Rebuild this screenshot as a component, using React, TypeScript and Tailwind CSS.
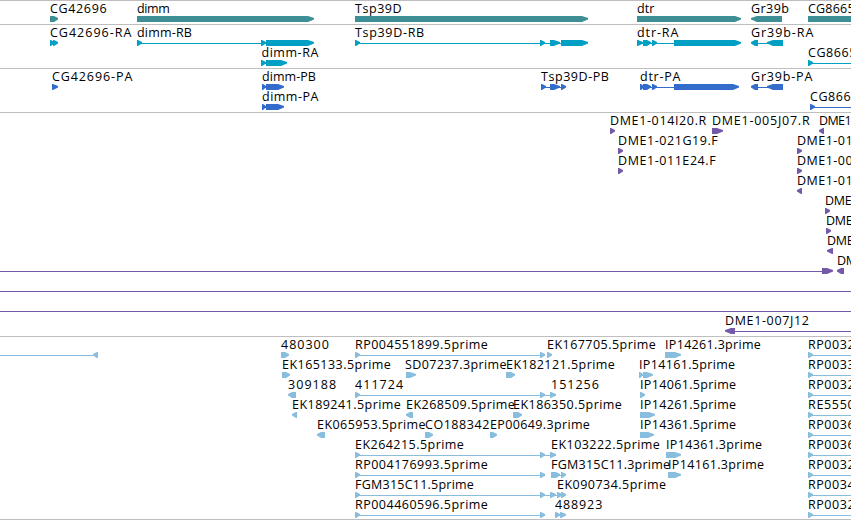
import React from "react";

type Label = [text: string, x: number, end: number, row: number];
// dir: 1 = forward strand, -1 = reverse strand, 0 = plain block
type Block = [x1: number, x2: number, row: number, dir?: number];
type Link = [x1: number, x2: number, row: number];

interface TrackData {
  name: string;
  top: number;
  height: number;
  color: string;
  size: string;
  labels: Label[];
  blocks: Block[];
  links: Link[];
}

const WIDTH = 851;

const tracks: TrackData[] = [
  {
    name: "Genes",
    top: 1,
    height: 23,
    color: "#3d8e95",
    size: "h-[24px]",
    labels: [
      ["CG42696", 50, 106, 0],
      ["dimm", 137, 169.3, 0],
      ["Tsp39D", 355, 401, 0],
      ["dtr", 637, 653.7, 0],
      ["Gr39b", 751, 788.3, 0],
      ["CG8665", 808, 854, 0],
    ],
    blocks: [
      [50, 58, 0],
      [137, 314, 0],
      [355, 588, 0],
      [637, 741, 0],
      [751, 782, 0, -1],
      [808, 851, 0, 0],
    ],
    links: [],
  },
  {
    name: "Transcripts",
    top: 25,
    height: 43,
    color: "#009fc3",
    size: "h-[44px]",
    labels: [
      ["CG42696-RA", 50, 130.7, 0],
      ["dimm-RB", 137, 191.3, 0],
      ["dimm-RA", 261.5, 317.7, 1],
      ["Tsp39D-RB", 355, 423.5, 0],
      ["dtr-RA", 637, 677.7, 0],
      ["Gr39b-RA", 751, 812.7, 0],
      ["CG8665-RA", 808, 877, 1],
    ],
    blocks: [
      [50, 54, 0], [53, 58, 0],
      [137, 142, 0], [261, 266, 0], [266, 314, 0],
      [261, 266, 1], [266, 287, 1],
      [355, 360, 0], [540, 545, 0], [550, 560, 0], [561, 588, 0],
      [637, 643, 0], [643, 651, 0], [652, 657, 0], [674, 741, 0],
      [751, 758, 0, -1], [767, 783, 0, -1],
      [808, 813, 1],
    ],
    links: [
      [137, 266, 0], [261, 267, 1], [355, 562, 0],
      [637, 675, 0], [757, 768, 0], [808, 851, 1],
    ],
  },
  {
    name: "Coding",
    top: 69,
    height: 43,
    color: "#336ccb",
    size: "h-[44px]",
    labels: [
      ["CG42696-PA", 52, 131.7, 0],
      ["dimm-PB", 262, 315.3, 0],
      ["dimm-PA", 262, 317.7, 1],
      ["Tsp39D-PB", 541, 608.3, 0],
      ["dtr-PA", 640, 679.7, 0],
      ["Gr39b-PA", 751, 811.7, 0],
      ["CG8665-PA", 810, 879, 1],
    ],
    blocks: [
      [52, 58, 0],
      [262, 266, 0], [266, 284, 0],
      [262, 266, 1], [266, 284, 1],
      [541, 546, 0], [550, 560, 0], [561, 566, 0],
      [640, 644, 0], [643, 651, 0], [652, 657, 0], [674, 739, 0],
      [751, 758, 0, -1], [767, 783, 0, -1],
      [810, 815, 1],
    ],
    links: [
      [262, 267, 0], [262, 267, 1], [541, 562, 0],
      [640, 675, 0], [757, 768, 0], [810, 851, 1],
    ],
  },
  {
    name: "BACs",
    top: 113,
    height: 223,
    color: "#7459a9",
    size: "h-[224px]",
    labels: [
      ["DME1-014I20.R", 610, 705.7, 0],
      ["DME1-005J07.R", 712, 809, 0],
      ["DME1", 819, 851, 0],
      ["DME1-021G19.F", 618, 717.2, 1],
      ["DME1-01", 797, 852, 1],
      ["DME1-011E24.F", 618, 715, 2],
      ["DME1-00", 797, 852, 2],
      ["DME1-01", 797, 852, 3],
      ["DME", 825, 851, 4],
      ["DME", 826, 852, 5],
      ["DME", 827, 853, 6],
      ["DME", 837, 863, 7],
      ["DME1-007J12", 725, 808.3, 10],
    ],
    blocks: [
      [610, 615, 0], [712, 723, 0], [819, 824, 0, -1],
      [618, 623, 1], [797, 802, 1],
      [618, 623, 2], [797, 802, 2],
      [797, 802, 3, -1],
      [825, 830, 4], [826, 831, 5], [827, 833, 6, -1],
      [822, 833, 7], [837, 844, 7, -1],
      [725, 735, 10, -1],
    ],
    links: [
      [0, 823, 7], [0, 851, 8], [0, 851, 9], [734, 851, 10],
    ],
  },
  {
    name: "ESTs",
    top: 337,
    height: 182,
    color: "#88bddd",
    size: "h-[183px]",
    labels: [
      ["480300", 281, 328.3, 0],
      ["RP004551899.5prime", 355, 487.3, 0],
      ["EK167705.5prime", 547, 655.3, 0],
      ["IP14261.3prime", 665, 760.3, 0],
      ["RP0032", 808, 854, 0],
      ["EK165133.5prime", 282, 390.3, 1],
      ["SD07237.3prime", 405, 506, 1],
      ["EK182121.5prime", 506, 614.3, 1],
      ["IP14161.5prime", 639, 734.5, 1],
      ["RP0033", 808, 854, 1],
      ["309188", 288, 335.5, 2],
      ["411724", 355, 402.5, 2],
      ["151256", 551, 598.3, 2],
      ["IP14061.5prime", 640, 735.5, 2],
      ["RP0032", 808, 854, 2],
      ["EK189241.5prime", 292, 400.3, 3],
      ["EK268509.5prime", 406, 514.3, 3],
      ["EK186350.5prime", 513, 621.3, 3],
      ["IP14261.5prime", 640, 735.5, 3],
      ["RE5550", 808, 854, 3],
      ["EK065953.5prime", 317, 425, 4],
      ["CO188342", 425, 488.7, 4],
      ["EP00649.3prime", 490, 589.3, 4],
      ["IP14361.5prime", 640, 735.5, 4],
      ["RP0036", 808, 854, 4],
      ["EK264215.5prime", 355, 463.3, 5],
      ["EK103222.5prime", 551, 659.3, 5],
      ["IP14361.3prime", 666, 761.5, 5],
      ["RP0036", 808, 854, 5],
      ["RP004176993.5prime", 355, 487.3, 6],
      ["FGM315C11.3prime", 551, 669.5, 6],
      ["IP14161.3prime", 668, 763.5, 6],
      ["RP0032", 808, 854, 6],
      ["FGM315C11.5prime", 355, 473.3, 7],
      ["EK090734.5prime", 557, 665.5, 7],
      ["RP0034", 808, 854, 7],
      ["RP004460596.5prime", 355, 487.3, 8],
      ["488923", 555, 601.7, 8],
      ["RP0032", 808, 854, 8],
    ],
    blocks: [
      [93, 98, 0, -1], [281, 289, 0], [355, 360, 0], [540, 545, 0], [547, 552, 0], [665, 681, 0], [808, 813, 0],
      [282, 290, 1], [406, 416, 1], [506, 515, 1], [639, 643, 1], [643, 653, 1], [808, 813, 1],
      [288, 296, 2, -1], [355, 360, 2], [540, 545, 2], [550, 556, 2], [640, 645, 2], [808, 813, 2],
      [292, 297, 3, -1], [406, 413, 3, -1], [513, 522, 3], [640, 655, 3], [808, 813, 3],
      [317, 325, 4, -1], [425, 433, 4], [490, 497, 4], [640, 654, 4], [808, 813, 4],
      [355, 360, 5], [540, 545, 5], [550, 556, 5], [666, 681, 5], [808, 813, 5],
      [355, 360, 6], [540, 545, 6], [551, 560, 6], [561, 566, 6], [668, 681, 6], [808, 813, 6],
      [355, 360, 7], [540, 545, 7], [550, 556, 7], [557, 562, 7], [561, 566, 7], [808, 813, 7],
      [355, 360, 8], [540, 545, 8], [555, 560, 8], [560, 566, 8], [808, 813, 8],
    ],
    links: [
      [0, 93, 0], [355, 545, 0], [808, 851, 0],
      [639, 644, 1], [808, 851, 1],
      [355, 556, 2], [808, 851, 2],
      [808, 851, 3],
      [808, 851, 4],
      [355, 556, 5], [808, 851, 5],
      [355, 545, 6], [555, 564, 6], [808, 851, 6],
      [355, 565, 7], [808, 851, 7],
      [355, 545, 8], [555, 564, 8], [808, 851, 8],
    ],
  },
];

function arrowPoints(x1: number, x2: number, y: number, dir: number) {
  if (dir === 0) return `${x1},${y} ${x2},${y} ${x2},${y + 6} ${x1},${y + 6}`;
  const w = x2 - x1;
  const head = w <= 6 ? w : w <= 9 ? 5 : 7;
  const at = (d: number) => (dir > 0 ? x1 + d : x2 - d);
  const shoulder = w - head + 1;
  return [
    [at(0), y],
    [at(shoulder), y],
    [at(w), y + 2],
    [at(w), y + 3.5],
    [at(shoulder), y + 6],
    [at(0), y + 6],
  ]
    .map((p) => p.join(","))
    .join(" ");
}

function Track({ track }: { track: TrackData }) {
  const { name, top, height, color, size, labels, blocks, links } = track;
  const baseline = (row: number) => top + 12 + row * 20;
  return (
    <section aria-label={name} className={`w-full shrink-0 border-t border-[#bebebe] ${size}`}>
      <svg
        width={WIDTH}
        height={height}
        viewBox={`0 ${top} ${WIDTH} ${height}`}
        className="block overflow-hidden"
      >
        <g fill={color}>
          {links.map(([x1, x2, row], i) => (
            <rect key={i} x={x1} y={baseline(row) + 6} width={x2 - x1} height={1} />
          ))}
          {blocks.map(([x1, x2, row, dir = 1], i) => (
            <polygon key={i} points={arrowPoints(x1, x2, baseline(row) + 3, dir)} />
          ))}
        </g>
        <g className="fill-black font-['Open_Sans','DejaVu_Sans',sans-serif] text-[12.5px]">
          {labels.map(([text, x, end, row], i) => (
            <text
              key={i}
              x={x}
              y={baseline(row)}
              textLength={end - x + 0.6}
              lengthAdjust="spacing"
            >
              {text}
            </text>
          ))}
        </g>
      </svg>
    </section>
  );
}

export default function App() {
  return (
    <main className="flex h-[520px] w-[851px] flex-col overflow-hidden border-b border-[#bebebe] bg-white">
      {tracks.map((track) => (
        <Track key={track.name} track={track} />
      ))}
    </main>
  );
}
